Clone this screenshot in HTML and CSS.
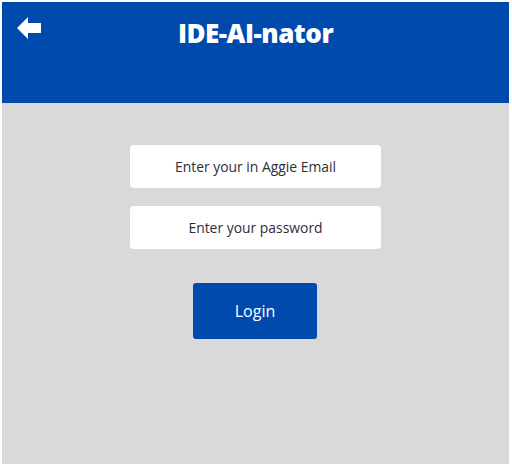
FILE: index.html
```html
<!DOCTYPE html>
<html>
<head>
<meta charset="utf-8">
<link rel="stylesheet" href="styles.css">
</head>
<body>
<div class="app">
  <header class="topbar">
    <button class="back" aria-label="Back">
      <svg width="25" height="24" viewBox="0 0 25 24"><path d="M0 12 L11 1 L11 7 L24 7 L24 17 L11 17 L11 23 Z" fill="#fff"/></svg>
    </button>
    <h1 class="title">IDE-AI-nator</h1>
  </header>
  <main class="content">
    <div class="field">Enter your in Aggie Email</div>
    <div class="field">Enter your password</div>
    <button class="login">Login</button>
  </main>
</div>
</body>
</html>
```
FILE: styles.css
```css
html, body { margin: 0; padding: 0; background: #fff; }
body { padding: 2px 3px 2px 2px; width: 507px; height: 462px; }
.app { height: 462px; display: flex; flex-direction: column; background: #d9d9d9; }
.topbar { height: 101px; background: #004aad; position: relative; display: flex; justify-content: center; }
.back { position: absolute; left: 15px; top: 14px; background: none; border: 0; padding: 0; margin: 0; line-height: 0; }
.title { margin: 14px 0 0; color: #fff; font-family: "Open Sans", sans-serif; font-weight: 800; font-size: 26px; line-height: 34px; letter-spacing: -0.5px; }
.content { flex: 1; display: flex; flex-direction: column; align-items: center; padding-top: 42px; }
.field { width: 251px; height: 43px; background: #fff; border-radius: 4px; display: flex; align-items: center; justify-content: center; font-family: "Open Sans", sans-serif; font-size: 13.9px; color: #2d2d3a; margin-bottom: 18px; }
.login { margin-top: 16px; width: 124px; height: 56px; background: #004aad; color: #fff; border: 0; border-radius: 3px; font-family: "Open Sans", sans-serif; font-size: 16px; font-weight: 500; margin-left: -1px; }
```
